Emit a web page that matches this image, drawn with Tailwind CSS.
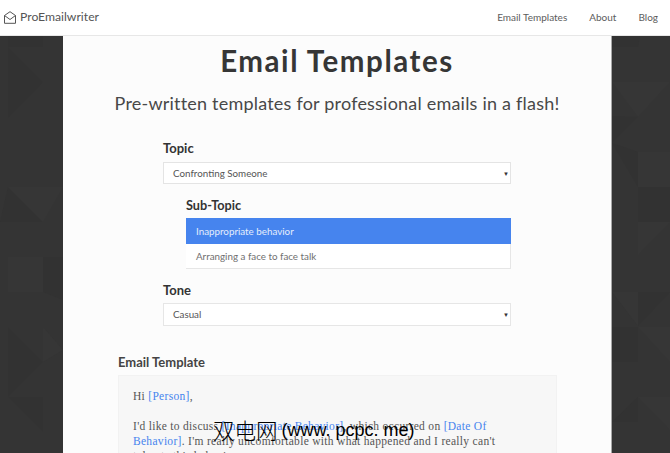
<!DOCTYPE html>
<html>
<head>
<meta charset="utf-8">
<script src="https://cdn.jsdelivr.net/npm/@tailwindcss/browser@4"></script>
</head>
<body class="h-[453px] overflow-hidden bg-[#333333] font-['Lato','Liberation_Sans',sans-serif] text-[#333333]">
<div class="relative h-[453px] w-[670px] overflow-hidden">
  <svg class="absolute inset-0" width="670" height="453" viewBox="0 0 670 453" aria-hidden="true">
    <rect width="670" height="453" fill="#343434"/>
    <g fill="#323232">
      <path d="M8 36H43V47H8Z"/>
      <path d="M8 47L43 82H8Z"/>
      <path d="M8 82H43L8 118Z"/>
      <path d="M0 222H43L8 187Z"/>
      <path d="M43 257H63V300L43 292Z"/>
      <path d="M8 327L43 362L8 362Z"/>
      <path d="M8 362H43L8 397Z"/>
      <path d="M8 397H43V432Z"/>
      <path d="M612 36H640L638 47H612Z"/>
      <path d="M612 116L638 117L612 143Z"/>
      <path d="M612 143L638 187V152Z"/>
      <path d="M638 187H670V222H638Z"/>
      <path d="M612 327H638V362H612Z"/>
      <path d="M638 397L612 422H638Z"/>
      <path d="M638 292V326L670 292Z"/>
    </g>
    <g fill="#363636">
      <path d="M8 187H63L43 222Z"/>
      <path d="M8 257H43V292H8Z"/>
      <path d="M43 327L63 350L43 362Z"/>
      <path d="M612 82H670L638 117Z"/>
      <path d="M638 152H670V187H638Z"/>
      <path d="M638 222H670L638 255Z"/>
      <path d="M612 292H638V326Z"/>
      <path d="M638 327H670V362Z"/>
      <path d="M638 397L670 430V397Z"/>
    </g>
  </svg>
  <header class="relative flex h-[36px] items-center justify-between border-b border-[#e7e7e7] bg-white pr-3 pl-1">
    <div class="flex items-center gap-[4px] text-[#555555]">
      <svg width="12" height="13" viewBox="0 0 12 13" fill="none" stroke="#555555" stroke-width="1"><path d="M0.5 4.5L6 0.7L11.5 4.5V12.3H0.5Z"/><path d="M0.5 4.5L6 8.5L11.5 4.5"/></svg>
      <span class="text-[12.2px] leading-none">ProEmailwriter</span>
    </div>
    <nav class="flex gap-[22px] text-[10px] text-[#5c5c5c]">
      <span>Email Templates</span><span>About</span><span>Blog</span>
    </nav>
  </header>
  <main class="relative ml-[63px] h-[417px] w-[549px] border-r border-[#a8a8a8] bg-[#fcfcfc]">
    <h1 class="pt-[6px] text-center text-[29.5px] leading-[38px] font-bold tracking-[1.55px] text-[#363636]">Email Templates</h1>
    <p class="mt-[11px] text-center text-[18px] leading-[24px] tracking-[0.21px] text-[#484848]">Pre-written templates for professional emails in a flash!</p>
    <div class="ml-[100px] w-[348px] pt-[25px]">
      <div class="text-[13px] leading-[16px] font-bold">Topic</div>
      <div class="mt-[6px] flex h-[22px] items-center justify-between border border-[#e4e4e4] bg-white pr-[1px] pl-[9px] text-[9.8px] text-[#555555]">
        <span>Confronting Someone</span><span class="text-[6px] text-[#333333]">▼</span>
      </div>
      <div class="ml-[23px] pt-[13px]">
        <div class="text-[12.7px] leading-[16px] font-bold">Sub-Topic</div>
        <div class="mt-[5px] flex h-[26px] items-center bg-[#4684ee] pl-[10px] text-[9.8px] text-[#e4edfc]">Inappropriate behavior</div>
        <div class="flex h-[25px] items-center border-r border-b border-[#e6e6e6] bg-white pl-[10px] text-[9.8px] text-[#707070]">Arranging a face to face talk</div>
      </div>
      <div class="pt-[13px] text-[13px] leading-[16px] font-bold">Tone</div>
      <div class="mt-[5px] flex h-[23px] items-center justify-between border border-[#e6e6e6] bg-white pr-[1px] pl-[9px] text-[9.8px] text-[#555555]">
        <span>Casual</span><span class="text-[6px] text-[#333333]">▼</span>
      </div>
    </div>
    <div class="ml-[55px] w-[439px] pt-[28px]">
      <div class="text-[13px] leading-[16px] font-bold text-[#444444]">Email Template</div>
      <div class="mt-[5px] h-[120px] border border-[#f2f2f2] bg-[#f7f7f7] pt-[13px] pr-[26px] pl-[14px] font-['Liberation_Serif',serif] text-[11.5px] leading-[15px] tracking-[0.3px] text-[#555555]">
        <p>Hi <span class="text-[#4684ee]">[Person]</span>,</p>
        <p class="mt-[15px]">I'd like to discuss <span class="text-[#4684ee]">[Inappropriate Behavior]</span>, which occurred on <span class="text-[#4684ee]">[Date Of Behavior]</span>. I'm really uncomfortable with what happened and I really can't tolerate this behavior.</p>
      </div>
    </div>
  </main>
  <div class="absolute top-[418px] left-[213px] flex items-center whitespace-nowrap text-black">
    <span class="font-['Noto_Sans_CJK_SC',sans-serif] text-[21.5px] leading-[24px] font-light">双电网</span>
    <span class="ml-[4px] font-['Liberation_Sans',sans-serif] text-[18px] leading-[24px]">(www. pcpc. me)</span>
  </div>
</div>
</body>
</html>
